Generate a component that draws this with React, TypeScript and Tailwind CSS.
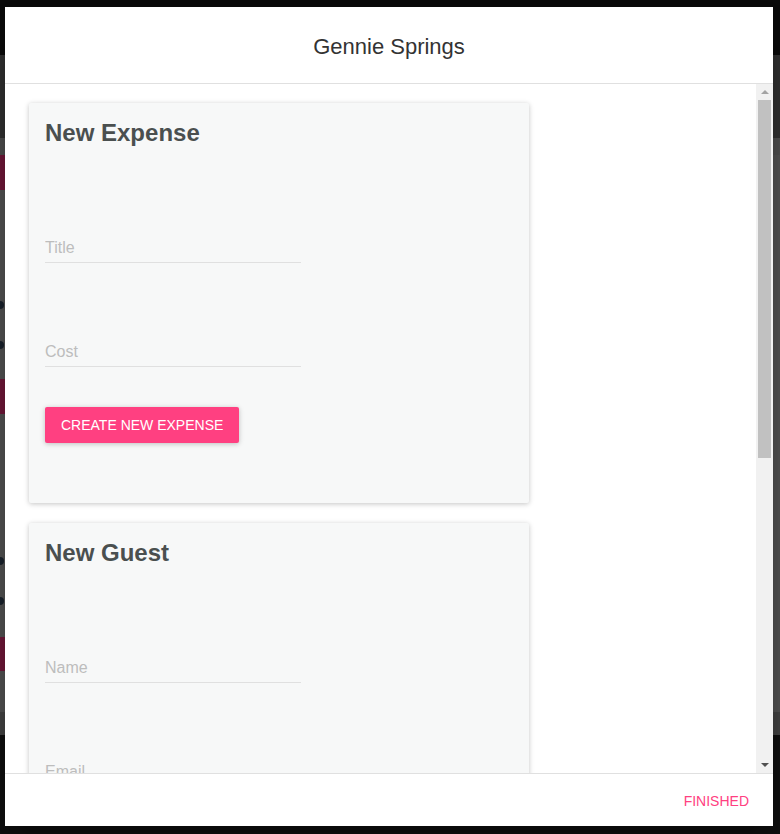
import React from 'react';

const font = "font-['Liberation_Sans',Arial,Helvetica,sans-serif]";

function Field({ placeholder, gap }: { placeholder: string; gap: string }) {
  return (
    <div className={`${gap} w-[256px] border-b border-[#e0e0e0] pb-[2px]`}>
      <input
        placeholder={placeholder}
        className="block h-6 w-full bg-transparent text-[16px] leading-6 text-[#333] outline-none placeholder:text-[#bdbdbd]"
      />
    </div>
  );
}

function Card({ title, fields, action }: { title: string; fields: string[]; action: string }) {
  return (
    <div className="w-[500px] h-[400px] shrink-0 bg-[#f7f8f8] px-4 pt-4 rounded-[2px] shadow-[0_1px_6px_rgba(0,0,0,0.12),0_1px_4px_rgba(0,0,0,0.12)]">
      <h2 className="text-[24px] leading-[28px] font-bold text-[#4a4f4f]">{title}</h2>
      <Field placeholder={fields[0]} gap="mt-[89px]" />
      <Field placeholder={fields[1]} gap="mt-[77px]" />
      <button className="mt-10 h-9 px-4 rounded-[2px] bg-[#ff4081] text-[14px] text-white uppercase shadow-[0_1px_6px_rgba(0,0,0,0.12),0_1px_4px_rgba(0,0,0,0.12)]">
        {action}
      </button>
    </div>
  );
}

function Scrollbar() {
  return (
    <div className="w-[17px] shrink-0 bg-[#f1f1f1] flex flex-col">
      <div className="h-4 flex items-center justify-center">
        <div className="w-0 h-0 border-x-[4px] border-x-transparent border-b-[4px] border-b-[#a3a3a3]" />
      </div>
      <div className="flex-1">
        <div className="mx-[2px] h-[358px] bg-[#c1c1c1]" />
      </div>
      <div className="h-[17px] flex items-center justify-center">
        <div className="w-0 h-0 border-x-[4px] border-x-transparent border-t-[4px] border-t-[#505050]" />
      </div>
    </div>
  );
}

export default function App() {
  return (
    <div className={`relative w-[780px] h-[834px] overflow-hidden bg-[#0b0b0b] ${font}`}>
      {/* dimmed page behind the dialog */}
      <div className="flex flex-col h-full">
        <div className="h-[55px] bg-[#0b0b0b]" />
        <div className="h-[83px] bg-[#353535]" />
        <div className="flex-1 bg-[#5a5a5a] flex flex-col">
          <div className="h-[17px] bg-[#555]" />
          <div className="h-[35px] w-[40px] bg-[#7a1a3e]" />
          <div className="mt-[111px] w-2 h-2 -ml-1 rounded-full bg-[#1c2530]" />
          <div className="mt-8 w-2 h-2 -ml-1 rounded-full bg-[#1c2530]" />
          <div className="mt-[30px] h-[35px] w-[40px] bg-[#7a1a3e]" />
          <div className="mt-[143px] w-2 h-2 -ml-1 rounded-full bg-[#1c2530]" />
          <div className="mt-8 w-2 h-2 -ml-1 rounded-full bg-[#1c2530]" />
          <div className="mt-[32px] h-[34px] w-[40px] bg-[#7a1a3e]" />
        </div>
        <div className="h-[23px] bg-[#4a4a4a]" />
        <div className="h-[99px] bg-[#111]" />
      </div>

      {/* dialog */}
      <div className="absolute left-[5px] top-[7px] w-[768px] h-[819px] bg-white flex flex-col shadow-[0_19px_60px_rgba(0,0,0,0.3),0_15px_20px_rgba(0,0,0,0.22)]">
        <div className="h-[77px] shrink-0 border-b border-[#e0e0e0] pt-6 text-center text-[22px] leading-8 text-[#333]">
          Gennie Springs
        </div>
        <div className="flex h-[689px] shrink-0">
          <div className="flex-1 overflow-hidden pl-6 pt-[19px] flex flex-col gap-5">
            <Card title="New Expense" fields={['Title', 'Cost']} action="Create new expense" />
            <Card title="New Guest" fields={['Name', 'Email']} action="Add new guest" />
          </div>
          <Scrollbar />
        </div>
        <div className="flex-1 border-t border-[#e0e0e0] px-2 pt-[9px] flex justify-end items-start">
          <button className="h-9 px-4 text-[14px] uppercase text-[#ff4081]">Finished</button>
        </div>
      </div>
    </div>
  );
}
